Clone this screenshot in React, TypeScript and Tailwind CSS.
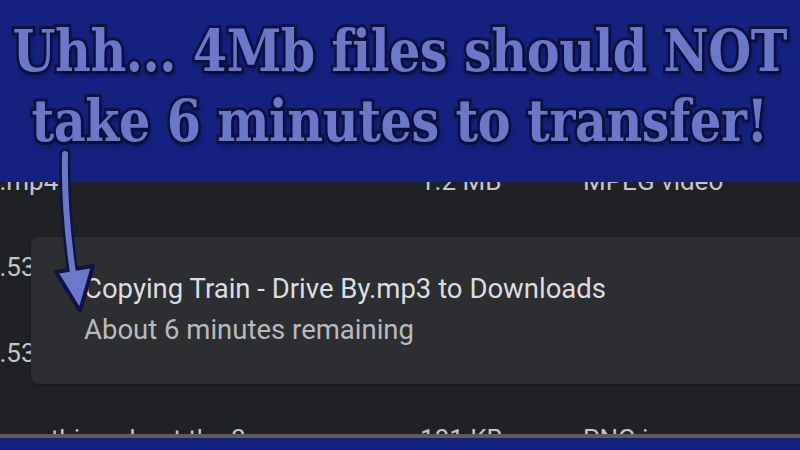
import React from "react";

const titleCls =
  "whitespace-nowrap text-center font-bold text-[#6b78c9] [font-family:'DejaVu_Serif',serif] text-[57px] leading-[70px] tracking-[-0.5px] scale-x-[0.865] [paint-order:stroke_fill] [-webkit-text-stroke:6px_#0e1342] [text-shadow:2px_4px_6px_rgba(5,10,50,0.5)]";

function Row({ name, size, type }: { name: string; size: string; type: string }) {
  return (
    <div className="flex h-[86px] shrink-0 items-end pb-[8px] text-[26px] text-[#c4c5c8] [font-family:Roboto,sans-serif]">
      <div className="w-[434px] -ml-[14px] whitespace-nowrap">{name}</div>
      <div className="w-[163px] whitespace-nowrap">{size}</div>
      <div className="whitespace-nowrap">{type}</div>
    </div>
  );
}

export default function App() {
  return (
    <div className="relative flex h-[450px] w-[800px] flex-col overflow-hidden bg-[#14217f]">
      <div className="flex h-[182px] shrink-0 flex-col items-center pt-[16px]">
        <div className={titleCls}>Uhh... 4Mb files should NOT</div>
        <div className={titleCls}>take 6 minutes to transfer!</div>
      </div>
      <div className="relative h-[252px] shrink-0 overflow-hidden bg-[#202124]">
        <div className="-mt-[59px] flex flex-col">
          <Row name="s.mp4" size="1.2 MB" type="MPEG video" />
          <Row name="s.53" size="" type="" />
          <Row name="s.53" size="" type="" />
          <Row name="something about the 3" size="101 KB" type="PNG image" />
        </div>
        <div className="absolute left-[31px] top-[55px] h-[147px] w-[800px] rounded-[8px] bg-[#2d2e31] pl-[53px] pt-[34px] [font-family:Roboto,sans-serif] shadow-[0_1px_3px_rgba(0,0,0,0.3)]">
          <div className="whitespace-nowrap text-[27.5px] leading-[36px] text-[#dcdde0]">
            Copying Train - Drive By.mp3 to Downloads
          </div>
          <div className="mt-[5px] whitespace-nowrap text-[27.5px] leading-[36px] text-[#b8babe]">
            About 6 minutes remaining
          </div>
        </div>
      </div>
      <div className="h-[4px] shrink-0 bg-[#5a5c61]" />
      <div className="flex-1 bg-[#14217f]" />
      <svg className="pointer-events-none absolute left-0 top-0" width="800" height="450" viewBox="0 0 800 450">
        <g strokeLinecap="round" strokeLinejoin="round">
          <path d="M65 154 C64 200 68 240 74 282" fill="none" stroke="#0e1342" strokeWidth="11" />
          <path d="M56 272 L93 266 L80 311 Z" fill="#6b78c9" stroke="#0e1342" strokeWidth="4" />
          <path d="M65 154 C64 200 68 240 74 280" fill="none" stroke="#6b78c9" strokeWidth="6" />
        </g>
      </svg>
    </div>
  );
}
